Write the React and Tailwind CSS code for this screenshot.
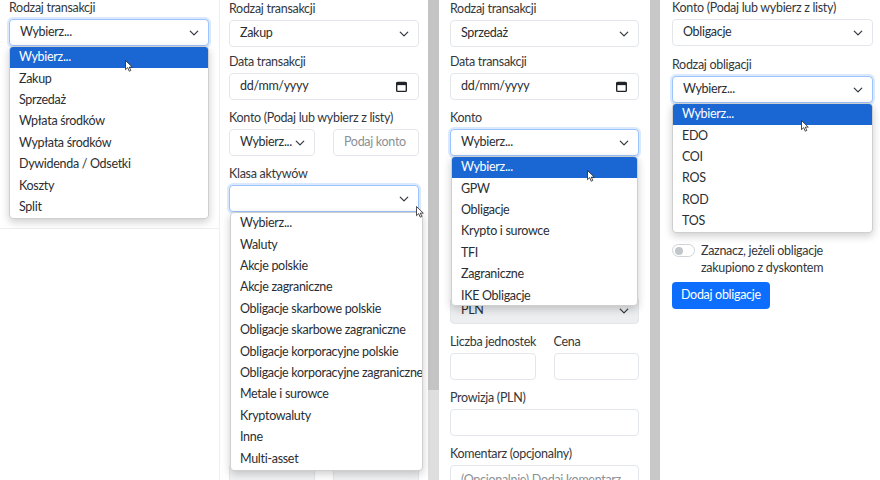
import React from 'react'

function Chevron() {
  return (
    <svg viewBox="0 0 16 16" className="h-[10px] w-[10px] shrink-0" fill="none" stroke="#343a40" strokeWidth="2" strokeLinecap="round" strokeLinejoin="round">
      <path d="m2 5 6 6 6-6" />
    </svg>
  )
}

function CalendarIcon() {
  return (
    <svg viewBox="0 0 12 12" className="h-[11px] w-[11px] shrink-0" fill="none">
      <rect x="0.75" y="1.5" width="10.5" height="9.75" rx="1" stroke="#1f2328" strokeWidth="1.5" />
      <rect x="0.75" y="1.5" width="10.5" height="3" fill="#1f2328" />
    </svg>
  )
}

function Cursor({ className }) {
  return (
    <svg viewBox="0 0 8 12" className={`absolute z-20 h-[12px] w-[8px] ${className}`}>
      <path d="M0.5 0.5v9.2l2.2-2.1 1.5 3.6 1.6-.7-1.5-3.4h3z" fill="#fff" stroke="#222" strokeWidth="0.8" strokeLinejoin="round" />
    </svg>
  )
}

function Label({ children, className = '' }) {
  return <div className={`mb-[3px] h-[16px] whitespace-nowrap text-[12.5px] leading-[16px] text-[#34383d] ${className}`}>{children}</div>
}

function Select({ value, focus, disabled, className = '' }) {
  return (
    <div
      className={`flex h-[27px] items-center justify-between rounded-[4px] border pl-[10px] pr-[9px] text-[12.5px] text-[#2a2e33] ${
        focus ? 'border-[#9cc3fb] shadow-[0_0_0_2px_rgba(13,110,253,0.15)]' : 'border-[#e3e6ea]'
      } ${disabled ? 'bg-[#eceef0]' : 'bg-white'} ${className}`}
    >
      <span className="whitespace-nowrap">{value}</span>
      <Chevron />
    </div>
  )
}

function Input({ placeholder = '', className = '' }) {
  return (
    <div className={`flex h-[27px] items-center overflow-hidden rounded-[4px] border border-[#e3e6ea] bg-white pl-[10px] text-[12.5px] text-[#8b9096] ${className}`}>
      <span className="whitespace-nowrap">{placeholder}</span>
    </div>
  )
}

function DateInput() {
  return (
    <div className="flex h-[27px] items-center justify-between rounded-[4px] border border-[#e3e6ea] bg-white pl-[10px] pr-[11px] text-[12.5px] text-[#2a2e33]">
      <span>dd/mm/yyyy</span>
      <CalendarIcon />
    </div>
  )
}

function OptionList({ options, highlight, className = '' }) {
  return (
    <div className={`absolute top-full z-10 overflow-hidden rounded-[4px] border border-[#cfcfcf] bg-white shadow-[0_3px_8px_rgba(0,0,0,0.2)] ${className}`}>
      {options.map((o, i) => (
        <div
          key={o}
          className={`flex h-[21.4px] items-center whitespace-nowrap pl-[9px] pr-[2px] text-[12.5px] ${
            highlight && i === 0 ? 'bg-[#1a67d4] text-white' : 'text-[#2a2e33]'
          }`}
        >
          {o}
        </div>
      ))}
    </div>
  )
}

const transactionTypes = ['Wybierz...', 'Zakup', 'Sprzedaż', 'Wpłata środków', 'Wypłata środków', 'Dywidenda / Odsetki', 'Koszty', 'Split']

const assetClasses = [
  'Wybierz...',
  'Waluty',
  'Akcje polskie',
  'Akcje zagraniczne',
  'Obligacje skarbowe polskie',
  'Obligacje skarbowe zagraniczne',
  'Obligacje korporacyjne polskie',
  'Obligacje korporacyjne zagraniczne',
  'Metale i surowce',
  'Kryptowaluty',
  'Inne',
  'Multi-asset',
]

const accounts = ['Wybierz...', 'GPW', 'Obligacje', 'Krypto i surowce', 'TFI', 'Zagraniczne', 'IKE Obligacje']

const bondTypes = ['Wybierz...', 'EDO', 'COI', 'ROS', 'ROD', 'TOS']

export default function App() {
  return (
    <div className="flex h-[480px] w-[880px] overflow-hidden bg-white tracking-[-0.3px] text-[#2a2e33] [font-family:Lato,sans-serif]">
      {/* panel 1 */}
      <div className="w-[220px] shrink-0 border-r border-[#efefef]">
        <div className="h-[229px] border-b border-[#efefef] pl-[9px] pr-[10px]">
          <Label>Rodzaj transakcji</Label>
          <div className="relative">
            <Select value="Wybierz..." focus />
            <OptionList options={transactionTypes} highlight className="left-0 right-0" />
            <Cursor className="left-[116px] top-[41px]" />
          </div>
        </div>
      </div>

      {/* panel 2 */}
      <div className="flex w-[219px] shrink-0">
        <div className="w-[208px] px-[9px] pt-[1px]">
          <Label>Rodzaj transakcji</Label>
          <Select value="Zakup" />
          <Label className="mt-[7px]">Data transakcji</Label>
          <DateInput />
          <Label className="mt-[10px]">Konto (Podaj lub wybierz z listy)</Label>
          <div className="grid grid-cols-2 gap-[18px]">
            <Select value="Wybierz..." />
            <Input placeholder="Podaj konto" />
          </div>
          <Label className="mt-[10px]">Klasa aktywów</Label>
          <div className="relative">
            <Select value="" focus />
            <OptionList options={assetClasses} className="left-[1px] right-[-4px]" />
            <Cursor className="left-[187px] top-[21px]" />
          </div>
          <div className="mt-[252px] grid grid-cols-2 gap-[18px]">
            <div className="h-[27px] rounded-[4px] border border-[#e3e6ea] bg-[#f1f2f4]" />
            <div className="h-[27px] rounded-[4px] border border-[#e3e6ea] bg-[#f1f2f4]" />
          </div>
        </div>
        <div className="w-[11px] bg-[#dedede]">
          <div className="h-[390px] bg-[#c4c4c4]" />
        </div>
      </div>

      {/* panel 3 */}
      <div className="flex w-[221px] shrink-0">
        <div className="w-[211px] pl-[11px] pr-[11px] pt-[1px]">
          <Label>Rodzaj transakcji</Label>
          <Select value="Sprzedaż" />
          <Label className="mt-[7px]">Data transakcji</Label>
          <DateInput />
          <Label className="mt-[10px]">Konto</Label>
          <div className="relative">
            <Select value="Wybierz..." focus />
            <div className="absolute left-[1px] right-[1px] top-full z-10 h-[150px] overflow-hidden rounded-[4px] border border-[#cfcfcf] bg-white shadow-[0_3px_8px_rgba(0,0,0,0.2)]">
              {accounts.map((o, i) => (
                <div
                  key={o}
                  className={`flex h-[21.4px] items-center whitespace-nowrap pl-[9px] text-[12.5px] ${i === 0 ? 'bg-[#1a67d4] text-white' : 'text-[#2a2e33]'}`}
                >
                  {o}
                </div>
              ))}
            </div>
            <Cursor className="left-[137px] top-[41px]" />
          </div>
          <Select value="PLN" disabled className="mt-[141px]" />
          <div className="mt-[10px] grid grid-cols-2 gap-[18px]">
            <div>
              <Label>Liczba jednostek</Label>
              <Input />
            </div>
            <div>
              <Label>Cena</Label>
              <Input />
            </div>
          </div>
          <Label className="mt-[10px]">Prowizja (PLN)</Label>
          <Input />
          <Label className="mt-[10px]">Komentarz (opcjonalny)</Label>
          <div className="h-[60px] overflow-hidden whitespace-nowrap rounded-[4px] border border-[#e3e6ea] bg-white pl-[10px] pt-[5px] text-[12.5px] text-[#8b9096]">
            (Opcjonalnie) Dodaj komentarz...
          </div>
        </div>
        <div className="w-[10px] bg-[#c8c8c8]" />
      </div>

      {/* panel 4 */}
      <div className="w-[220px] shrink-0 pl-[12px] pr-[7px]">
        <Label>Konto (Podaj lub wybierz z listy)</Label>
        <Select value="Obligacje" />
        <Label className="mt-[11px]">Rodzaj obligacji</Label>
        <div className="relative">
          <Select value="Wybierz..." focus />
          <OptionList options={bondTypes} highlight className="left-0 right-0" />
          <Cursor className="left-[129px] top-[44px]" />
        </div>
        <div className="mt-[139px] flex items-start gap-[6px]">
          <div className="mt-[2px] flex h-[13px] w-[23px] shrink-0 items-center rounded-full border border-[#cfd3d7] bg-white px-[2px]">
            <div className="h-[8px] w-[8px] rounded-full bg-[#c2c5c9]" />
          </div>
          <div className="text-[12.5px] leading-[17px] text-[#34383d]">
            Zaznacz, jeżeli obligacje
            <br />
            zakupiono z dyskontem
          </div>
        </div>
        <button className="mt-[6px] flex h-[27px] items-center rounded-[4px] bg-[#0d6efd] px-[9px] text-[12.5px] text-white">
          Dodaj obligacje
        </button>
      </div>
    </div>
  )
}
